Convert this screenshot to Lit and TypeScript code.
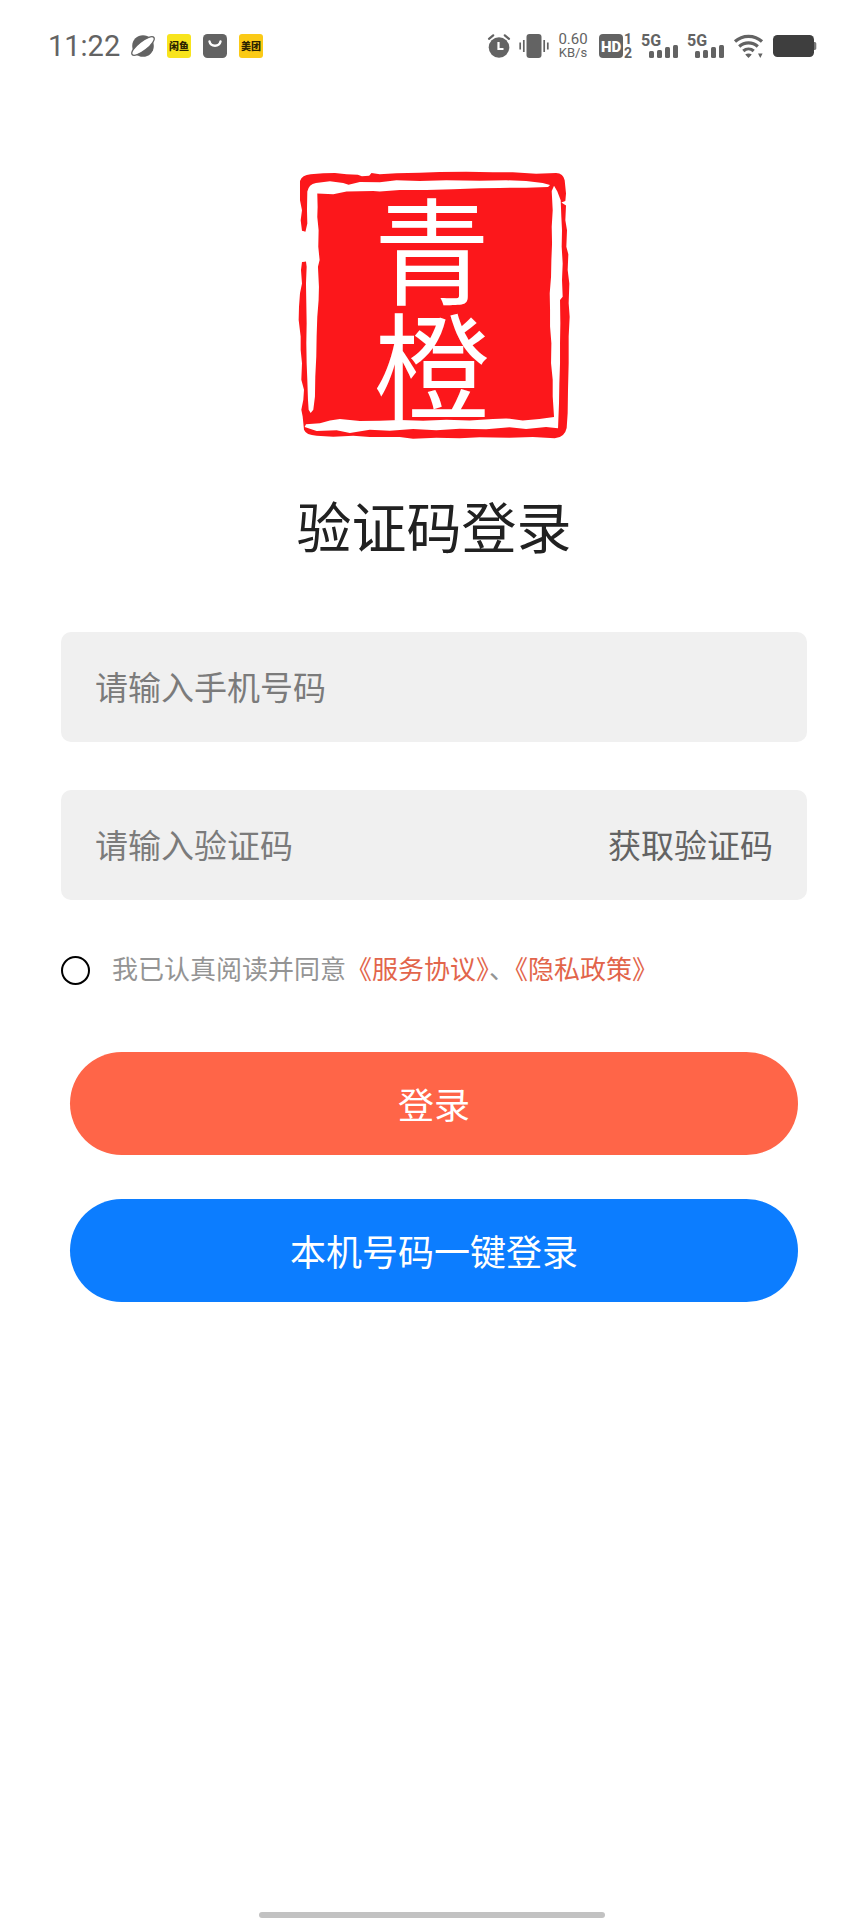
import { LitElement, html, svg, css } from "lit";
import { customElement, state } from "lit/decorators.js";

@customElement("status-bar")
class StatusBar extends LitElement {
  static styles = css`
    :host {
      display: flex;
      align-items: center;
      justify-content: space-between;
      height: 92px;
      padding: 0 48px;
      color: #636363;
      font-family: Roboto, "Noto Sans CJK SC", sans-serif;
    }
    .group {
      display: flex;
      align-items: center;
    }
    .left {
      gap: 12px;
    }
    .right {
      gap: 10px;
    }
    .time {
      font-size: 29px;
      line-height: 32px;
      width: 71px;
    }
    .speed {
      width: 30px;
      display: flex;
      flex-direction: column;
      align-items: center;
      line-height: 13px;
      white-space: nowrap;
    }
    .rate {
      font-size: 15px;
    }
    .unit {
      font-size: 13px;
    }
    svg {
      display: block;
      fill: #636363;
      overflow: visible;
    }
    .app {
      font-size: 10px;
      font-weight: 900;
      fill: #2b2300;
      text-anchor: middle;
      font-family: "Noto Sans CJK SC", sans-serif;
    }
    .tag {
      font-size: 16px;
      font-weight: 700;
    }
    .sub {
      font-size: 14px;
      font-weight: 700;
    }
    .hd {
      font-size: 15px;
      font-weight: 900;
      fill: #fff;
      text-anchor: middle;
    }
  `;

  private signal() {
    return html`<svg width="36" height="26" viewBox="0 0 36 26" aria-hidden="true">
      <text class="tag" x="-1" y="13">5G</text>
      ${[[7, 7], [15, 8], [23, 11], [31, 13]].map(
        ([x, h]) => svg`<rect x=${x} y=${25 - h} width="5" height=${h} rx="1.5"></rect>`
      )}
    </svg>`;
  }

  render() {
    return html`
      <div class="group left">
        <span class="time">11:22</span>
        <svg width="24" height="24" viewBox="0 0 24 24" aria-hidden="true">
          <circle cx="12" cy="12" r="10.8"></circle>
          <ellipse cx="12" cy="12" rx="13.8" ry="4.600" transform="rotate(-38 12 12)" fill="#fff" stroke="#636363" stroke-width="1.300"></ellipse>
        </svg>
        <svg width="24" height="24" viewBox="0 0 24 24">
          <rect width="24" height="24" rx="3" fill="#f8e41d"></rect>
          <text class="app" x="12" y="16">闲鱼</text>
        </svg>
        <svg width="24" height="24" viewBox="0 0 24 24" aria-hidden="true">
          <rect width="24" height="24" rx="4.500"></rect>
          <path d="M6.500 7.500c1.200 5.600 9.800 5.600 11 0" fill="none" stroke="#fff" stroke-width="2.400" stroke-linecap="round"></path>
        </svg>
        <svg width="24" height="24" viewBox="0 0 24 24">
          <rect width="24" height="24" rx="3" fill="#fbca16"></rect>
          <text class="app" x="12" y="16">美团</text>
        </svg>
      </div>
      <div class="group right">
        <svg width="22" height="24" viewBox="0 0 22 24" aria-hidden="true">
          <circle cx="11" cy="13.500" r="10.300"></circle>
          <path d="M1 4.800 5.200 1.300M21 4.800 16.800 1.300" fill="none" stroke="#636363" stroke-width="2.200" stroke-linecap="round"></path>
          <path d="M10.500 8v7h5" fill="none" stroke="#fff" stroke-width="2.200"></path>
        </svg>
        <svg width="28" height="24" viewBox="0 0 28 24" aria-hidden="true">
          <rect x="6.500" y="0" width="15" height="24" rx="3"></rect>
          <path d="M.2 8.500v7M3.800 6v12M24.200 6v12M27.800 8.500v7" fill="none" stroke="#636363" stroke-width="1.700"></path>
        </svg>
        <span class="speed"><span class="rate">0.60</span><span class="unit">KB/s</span></span>
        <svg width="34" height="24" viewBox="0 0 34 24">
          <rect x="1" width="24" height="24" rx="4"></rect>
          <text class="hd" x="13" y="17.500">HD</text>
          <text class="sub" x="26" y="10">1</text>
          <text class="sub" x="26" y="24">2</text>
        </svg>
        ${this.signal()} ${this.signal()}
        <svg width="29" height="24" viewBox="0 0 29 24" aria-hidden="true">
          <path d="M1 7.500C8.500.6 20.500.6 28 7.500M5.200 12.500c5.400-4.900 13.200-4.900 18.600 0M9.300 17c3-2.700 7.400-2.700 10.400 0" fill="none" stroke="#636363" stroke-width="3.200"></path>
          <path d="M11.200 20.500c1.800-1.400 4.800-1.400 6.600 0L14.500 24zM24 19.500h4.600L26.300 24z"></path>
        </svg>
        <svg width="43" height="22" viewBox="0 0 43 22" aria-hidden="true">
          <rect width="41" height="22" rx="4.500" fill="#3e3e3e"></rect>
          <path d="M41 7c1.600 0 2.300.6 2.300 1.800v4.400c0 1.200-.7 1.800-2.300 1.800z" fill="#777"></path>
        </svg>
      </div>
    `;
  }
}

@customElement("brand-seal")
class BrandSeal extends LitElement {
  static styles = css`
    :host {
      display: block;
      width: 270px;
    }
    svg {
      display: block;
      width: 100%;
      overflow: visible;
    }
    .ink {
      fill: #fc171b;
    }
    .paper {
      fill: #fff;
    }
    .mark {
      fill: #fff;
      text-anchor: middle;
      font-size: 350px;
      font-family: "Noto Sans CJK SC", sans-serif;
    }
  `;

  render() {
    return html`<svg viewBox="57 62 812 806" role="img" aria-label="青橙">
      <path class="ink" d="M60 92Q66 74 92 72L130 69 165 68 200 72 234 73 246 78 268 76 275 68 300 72 350 69 420 67 480 65 560 64 640 66 700 66 770 70 830 68Q852 69 856 90L860 130 858 152 846 157 860 166 858 210 863 240 861 290 867 312 865 360 870 400 868 460 871 500 868 560 868 640 866 720 865 790 862 835Q856 864 826 866L760 862 690 864 600 863 540 866 470 864 400 867 360 862 270 862 220 858 160 861 110 858Q78 856 72 840L68 800 64 780 70 750 72 720 64 690 66 640 62 600 62 560 56 510 57 470 60 430 66 400 63 360 66 336 80 332 84 300 82 246 66 242 62 210 66 180 60 150Z"></path>
      <path class="paper" d="M82 124Q86 102 108 98L150 93 190 98 206 103 240 95 300 96 350 90 420 92 500 90 600 91 680 90 740 92 790 98 812 104 806 110 740 112 660 113 600 114 520 117 440 119 360 119 300 124 280 122 200 124 160 132 112 130 113 170 112 200 116 240 115 290 119 330 114 350 117 410 116 450 112 500 110 560 109 620 106 680 105 740 100 780 92 790 86 780 84 750 82 690 80 640 79 580 80 520 79 460 78 400 80 350 78 334 62 336 60 290 60 242 76 246 82 220 81 180Z"></path>
      <path class="paper" d="M817 122 824 106 834 124 844 150 846 200 848 240 847 290 850 340 848 390 850 440 842 450 843 520 842 580 842 640 840 700 839 760 836 836 800 832 740 838 690 833 620 839 540 837 470 842 400 838 330 843 270 840 210 850 170 842 110 844 74 832 78 824 120 821 150 812 180 808 240 814 300 813 360 811 430 813 500 810 570 812 640 808 680 806 730 812 780 808 824 802 820 740 820 690 815 640 816 580 812 530 812 480 811 430 815 380 816 330 818 280 817 230 820 180Z"></path>
      <text class="mark" x="457" y="438">青</text>
      <text class="mark" x="457" y="783">橙</text>
    </svg>`;
  }
}

@customElement("app-root")
class AppRoot extends LitElement {
  @state() private agreed = false;

  static styles = css`
    :host {
      display: flex;
      flex-direction: column;
      min-height: 100vh;
      background: #fff;
      color: #212121;
      font-family: "Noto Sans CJK SC", sans-serif;
    }
    * {
      box-sizing: border-box;
    }
    main {
      display: flex;
      flex-direction: column;
      align-items: center;
      padding: 79px 57px 0 61px;
    }
    h1 {
      margin: 53px 0 0;
      font-size: 55px;
      line-height: 64px;
      font-weight: 400;
    }
    form {
      width: 100%;
      margin-top: 76px;
      display: flex;
      flex-direction: column;
      gap: 48px;
    }
    .field {
      display: flex;
      align-items: center;
      height: 110px;
      padding: 0 34px 2px;
      border-radius: 10px;
      background: #f0f0f0;
    }
    input,
    button {
      font: inherit;
      border: 0;
      padding: 0;
      margin: 0;
      background: none;
    }
    .text {
      flex: 1;
      min-width: 0;
      height: 48px;
      outline: 0;
      color: #212121;
      font-size: 33px;
    }
    .text::placeholder {
      color: #7b7b7b;
      opacity: 1;
    }
    .code {
      color: #636363;
      font-size: 33px;
      line-height: 48px;
    }
    .agree {
      display: flex;
      align-items: center;
      gap: 22px;
      height: 30px;
      margin-top: 7px;
      color: #949494;
      font-size: 26px;
      line-height: 30px;
    }
    .agree label {
      padding-bottom: 4px;
    }
    .tick {
      appearance: none;
      flex: none;
      width: 29px;
      height: 29px;
      border: 2px solid #000;
      border-radius: 50%;
    }
    .tick:checked {
      background: #ff6548;
    }
    a {
      color: #e2654b;
      text-decoration: none;
    }
    .actions {
      display: flex;
      flex-direction: column;
      gap: 44px;
      margin-top: 19px;
      padding: 0 9px;
    }
    .action {
      height: 103px;
      padding-bottom: 2px;
      border-radius: 52px;
      color: #fff;
      font-size: 36px;
    }
    .primary {
      background: #ff6548;
    }
    .quick {
      background: #0c7dff;
    }
    .home {
      width: 40%;
      height: 6px;
      margin: auto auto 2px;
      border-radius: 3px;
      background: #c2c2c2;
    }
  `;

  render() {
    return html`
      <status-bar></status-bar>
      <main>
        <brand-seal></brand-seal>
        <h1>验证码登录</h1>
        <form @submit=${(e: Event) => e.preventDefault()}>
          <div class="field">
            <input class="text" type="tel" aria-label="手机号码" placeholder="请输入手机号码" />
          </div>
          <div class="field">
            <input class="text" inputmode="numeric" aria-label="验证码" placeholder="请输入验证码" />
            <button class="code" type="button">获取验证码</button>
          </div>
          <div class="agree">
            <input
              class="tick"
              id="agree"
              type="checkbox"
              .checked=${this.agreed}
              @change=${(e: Event) => (this.agreed = (e.target as HTMLInputElement).checked)}
            />
            <label for="agree">我已认真阅读并同意<a href="#terms">《服务协议》</a>、<a href="#privacy">《隐私政策》</a></label>
          </div>
          <div class="actions">
            <button class="action primary" type="submit">登录</button>
            <button class="action quick" type="button">本机号码一键登录</button>
          </div>
        </form>
      </main>
      <div class="home"></div>
    `;
  }
}
